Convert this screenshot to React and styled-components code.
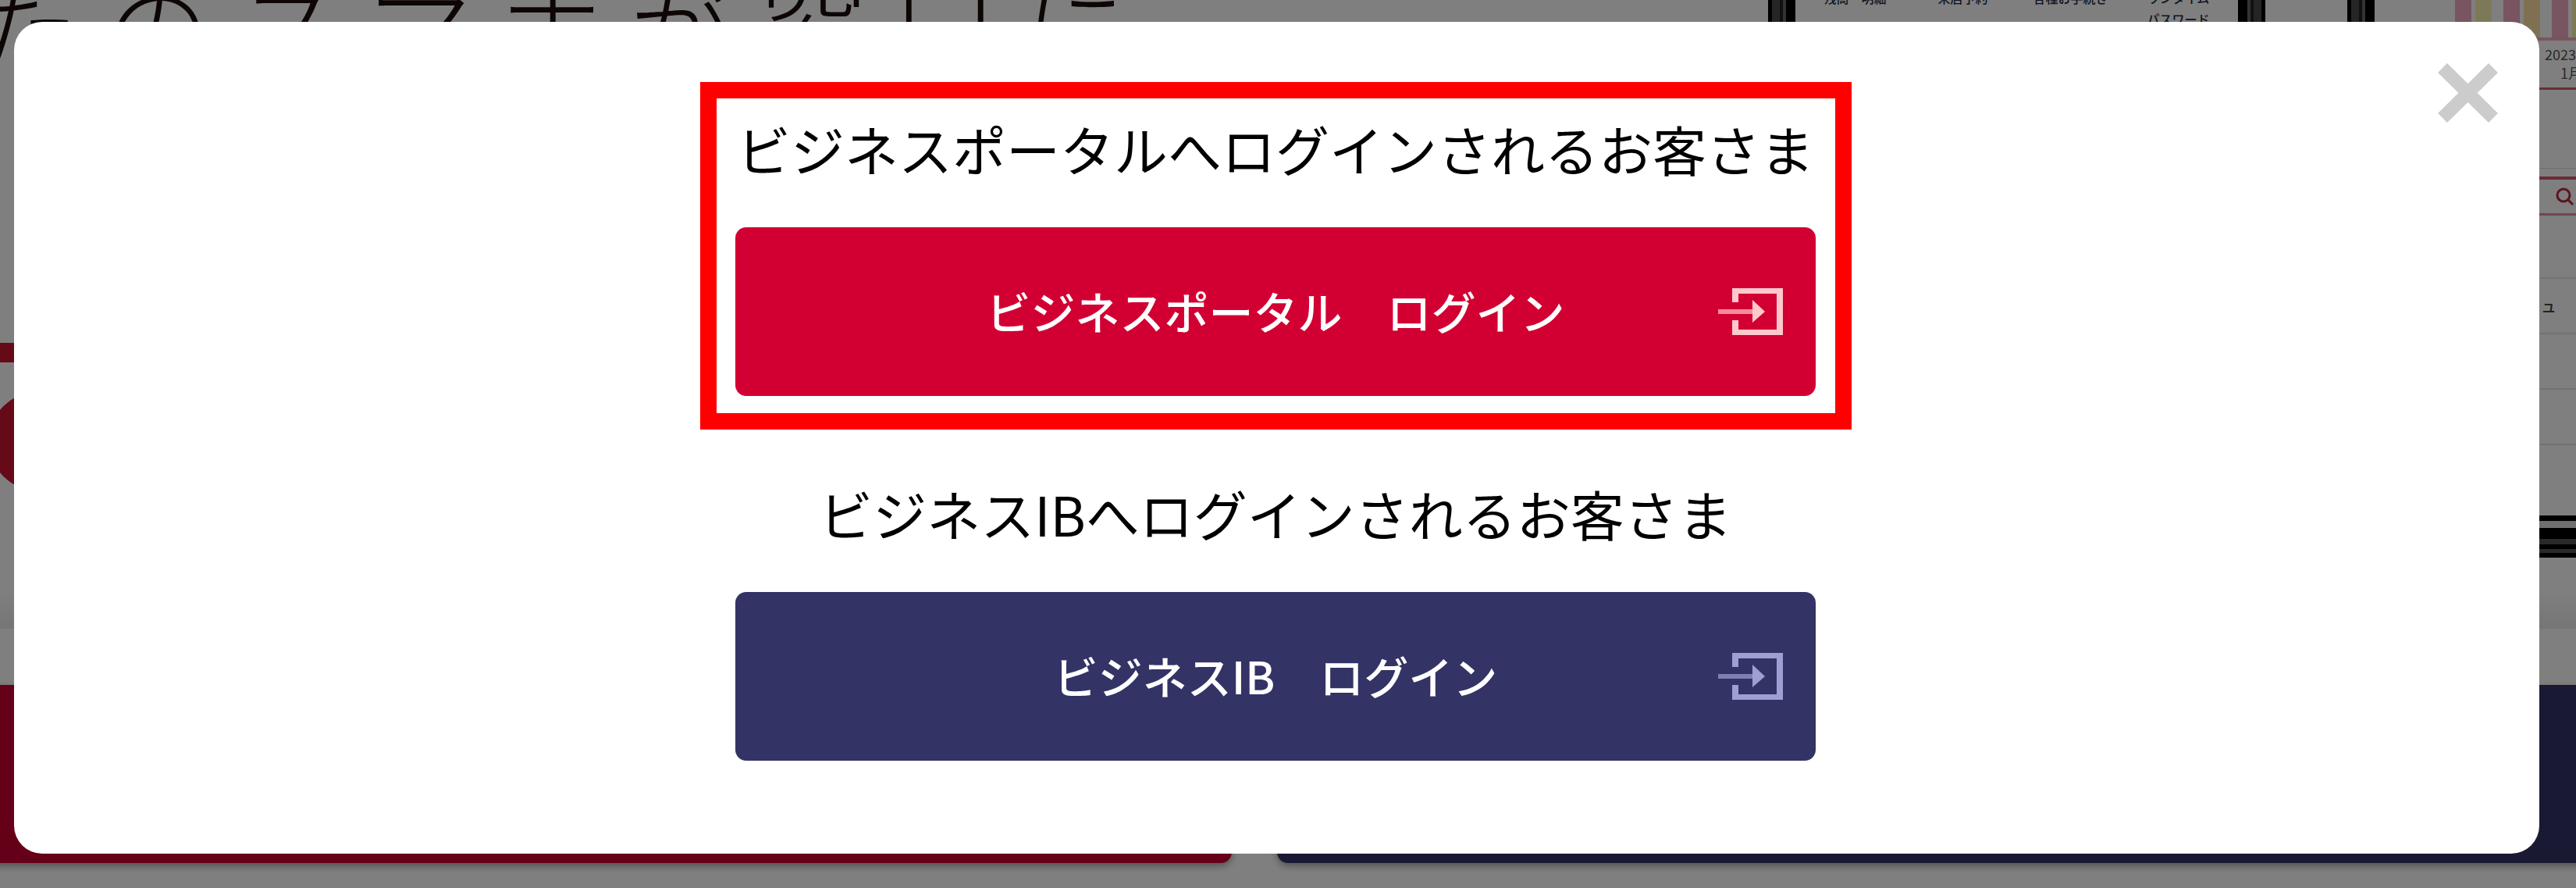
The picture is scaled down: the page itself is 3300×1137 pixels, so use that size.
import styled, { createGlobalStyle } from "styled-components";

const GlobalStyle = createGlobalStyle`
  * {
    box-sizing: border-box;
  }
  body {
    margin: 0;
    background: #fff;
    color: #000;
    font-family: "Noto Sans CJK JP", "Noto Sans", sans-serif;
  }
`;

/* ---------- page behind the dialog ---------- */

const Page = styled.div`
  position: fixed;
  inset: 0;
  overflow: hidden;
`;
const Hero = styled.section`
  display: flex;
  justify-content: space-between;
  height: 805px;
  overflow: hidden;
  background: linear-gradient(to bottom, #fff 94%, #ebebeb);
`;
const Catch = styled.h1`
  display: flex;
  gap: 32px;
  margin: -36px 0 0 -34px;
  font-size: 136px;
  line-height: 136px;
  font-weight: 300;
  color: #1c0c0a;
  white-space: nowrap;
`;
const CatchLine = styled.div`
  width: 600px;
  height: 25px;
  margin-top: 339px;
  background: #cc1430;
`;
const CatchDot = styled.div`
  width: 128px;
  height: 128px;
  margin: 37px 0 0 -14px;
  border-radius: 50%;
  background: #cc1430;
`;
const Phones = styled.div`
  display: flex;
  gap: 105px;
  flex-shrink: 0;
  margin-right: -344px;
`;
const Phone = styled.div`
  display: flex;
  flex-direction: column;
  width: 637px;
  height: 714px;
`;
const Screen = styled.div`
  flex: 1;
  padding: 0 30px;
  border: solid #000;
  border-width: 0 5px;
  box-shadow: inset 10px 0 #4a4a4a, inset -10px 0 #4a4a4a,
    inset 14px 0 #222, inset -14px 0 #222, inset 18px 0 #666,
    inset -18px 0 #666, inset 30px 0 #000, inset -30px 0 #000;
`;
const PhoneBottom = styled.div`
  height: 54px;
  background: linear-gradient(
    to bottom,
    #000 7px,
    #e0e0e0 7px 16px,
    #000 16px 30px,
    #555 30px 37px,
    #000 37px 43px,
    #555 43px 48px,
    #000 48px
  );
`;
const PhoneMenu = styled.div`
  display: grid;
  grid-template-columns: repeat(4, 138px);
  justify-content: center;
  margin-top: -16px;
  font-size: 16px;
  line-height: 27px;
  font-weight: 500;
  text-align: center;
  color: #1c2a44;
`;
const Chart = styled.div`
  display: flex;
  gap: 15px;
  height: 48px;
  padding-left: 103px;
`;
const Pair = styled.div`
  display: flex;
  gap: 5px;
`;
const Bar = styled.span`
  width: 21px;
  background: ${({ $color }) => $color};
`;
const ChartLabel = styled.div`
  height: 64px;
  padding: 5px 0 0 218px;
  border-top: 4px solid #f0aabb;
  font-size: 18px;
  line-height: 24px;
  color: #555;

  & span {
    display: block;
  }
  & span + span {
    padding-left: 20px;
  }
`;
const SearchRow = styled.div`
  display: flex;
  align-items: center;
  height: 50px;
  margin: 10px 0;
  padding-left: 232px;
  border-top: 4px solid #d4566a;
  border-bottom: 3px solid #e58a98;
  color: #b8283c;
`;
const ChartSpace = styled.div`
  height: 104px;
  border-top: 3px solid #c86070;
  border-bottom: 1px solid #ddd;
`;
const Row = styled.div`
  height: 71px;
  padding-left: 173px;
  border-bottom: 2px solid #e4e4e4;
  font-size: 20px;
  line-height: 69px;
  font-weight: 500;
  color: #444;
`;
const PageLogins = styled.div`
  display: grid;
  grid-template-columns: 1fr 1fr;
  gap: 58px;
  margin: 72px -20px 0 -106px;
`;
const PageLogin = styled.div`
  height: 228px;
  border-radius: 14px;
  background: ${({ $color }) => $color};
  box-shadow: 0 4px 10px rgba(0, 0, 0, 0.35);
`;

/* ---------- dialog ---------- */

const Overlay = styled.div`
  position: fixed;
  inset: 0;
  padding: 28px 47px 44px 18px;
  background: rgba(0, 0, 0, 0.5);
`;
const Dialog = styled.div`
  position: relative;
  display: flex;
  flex-direction: column;
  align-items: center;
  gap: 22px;
  padding: 77px 2px 76px 0;
  border-radius: 36px;
  background: #fff;
`;
const CloseButton = styled.button`
  position: absolute;
  top: 53px;
  right: 53px;
  display: flex;
  padding: 0;
  border: 0;
  background: none;
  color: #ccc;
  cursor: pointer;
`;
const LoginGroup = styled.section`
  width: 1475px;
  max-width: 100%;
  padding: 14px 25px 22px 24px;
  border: 21px solid ${({ $marked }) => ($marked ? "#f00" : "transparent")};
`;
const GroupTitle = styled.h2`
  margin: 0 0 51px;
  font-size: 69px;
  line-height: 100px;
  font-weight: 400;
  text-align: center;
  white-space: nowrap;
`;
const LoginLink = styled.a`
  display: grid;
  grid-template-columns: 1fr auto 1fr;
  align-items: center;
  height: 216px;
  padding: 0 42px;
  border-radius: 14px;
  background: ${({ $color }) => $color};
  color: #fff;
  font-size: 57px;
  line-height: 84px;
  font-weight: 500;
  text-decoration: none;
  white-space: nowrap;

  & svg {
    justify-self: end;
    color: ${({ $iconColor }) => $iconColor};
  }
`;
const LoginLabel = styled.span`
  grid-column: 2;
  padding-bottom: 4px;
`;

const catchCopy = "たのスマホが窓口に";

const logins = [
  {
    title: "ビジネスポータルへログインされるお客さま",
    label: "ビジネスポータル　ログイン",
    color: "#d20032",
    iconColor: "#ffc8cc",
    marked: true,
  },
  {
    title: "ビジネスIBへログインされるお客さま",
    label: "ビジネスIB　ログイン",
    color: "#333366",
    iconColor: "#9f9fd4",
    marked: false,
  },
];

function LoginIcon() {
  return (
    <svg width="83" height="60" viewBox="0 0 83 60" aria-hidden="true">
      <path
        d="M18 0H83V60H18V41H26V53H75V7H26V18H18Z"
        fill="currentColor"
      />
      <path d="M0 27H45V33H0Z" fill="currentColor" opacity="0.7" />
      <path d="M44 15L60 30L44 44Z" fill="currentColor" />
    </svg>
  );
}

function CloseIcon() {
  return (
    <svg width="77" height="76" viewBox="0 0 77 76" aria-hidden="true">
      <path
        d="M6 6L71 70M71 6L6 70"
        stroke="currentColor"
        strokeWidth="17"
        fill="none"
      />
    </svg>
  );
}

function SearchIcon() {
  return (
    <svg width="24" height="24" viewBox="0 0 24 24" aria-hidden="true">
      <g fill="none" stroke="currentColor" strokeWidth="3">
        <circle cx="10" cy="10" r="8" />
        <path d="M16 16L22 22" />
      </g>
    </svg>
  );
}

function BackPage() {
  return (
    <Page aria-hidden="true">
      <Hero>
        <div>
          <Catch>
            {[...catchCopy].map((letter) => (
              <span key={letter}>{letter}</span>
            ))}
          </Catch>
          <CatchLine />
          <CatchDot />
        </div>
        <Phones>
          <Phone>
            <Screen>
              <PhoneMenu>
                <span>残高・明細</span>
                <span>来店予約</span>
                <span>各種お手続き</span>
                <span>
                  ワンタイム
                  <br />
                  パスワード
                </span>
              </PhoneMenu>
            </Screen>
            <PhoneBottom />
          </Phone>
          <Phone>
            <Screen>
              <Chart>
                <Pair>
                  <Bar $color="#f0aac0" />
                  <Bar $color="#faf0b0" />
                </Pair>
                <Pair>
                  <Bar $color="#f0aac0" />
                  <Bar $color="#ffe0a8" />
                </Pair>
                <Pair>
                  <Bar $color="#f0aac0" />
                  <Bar $color="#faf0b0" />
                </Pair>
              </Chart>
              <ChartLabel>
                <span>2023/</span>
                <span>1月</span>
              </ChartLabel>
              <ChartSpace />
              <SearchRow>
                <SearchIcon />
              </SearchRow>
              <Row />
              <Row>メニュ</Row>
              <Row />
              <Row />
            </Screen>
            <PhoneBottom />
          </Phone>
        </Phones>
      </Hero>
      <PageLogins>
        <PageLogin $color="#cc0033" />
        <PageLogin $color="#333366" />
      </PageLogins>
    </Page>
  );
}

function App() {
  return (
    <>
      <GlobalStyle />
      <BackPage />
      <Overlay>
        <Dialog role="dialog" aria-modal="true" aria-label="ログイン" lang="ja">
          {logins.map((login) => (
            <LoginGroup key={login.label} $marked={login.marked}>
              <GroupTitle>{login.title}</GroupTitle>
              <LoginLink
                href="#"
                $color={login.color}
                $iconColor={login.iconColor}
              >
                <LoginLabel>{login.label}</LoginLabel>
                <LoginIcon />
              </LoginLink>
            </LoginGroup>
          ))}
          <CloseButton type="button" aria-label="閉じる">
            <CloseIcon />
          </CloseButton>
        </Dialog>
      </Overlay>
    </>
  );
}

export default App;
